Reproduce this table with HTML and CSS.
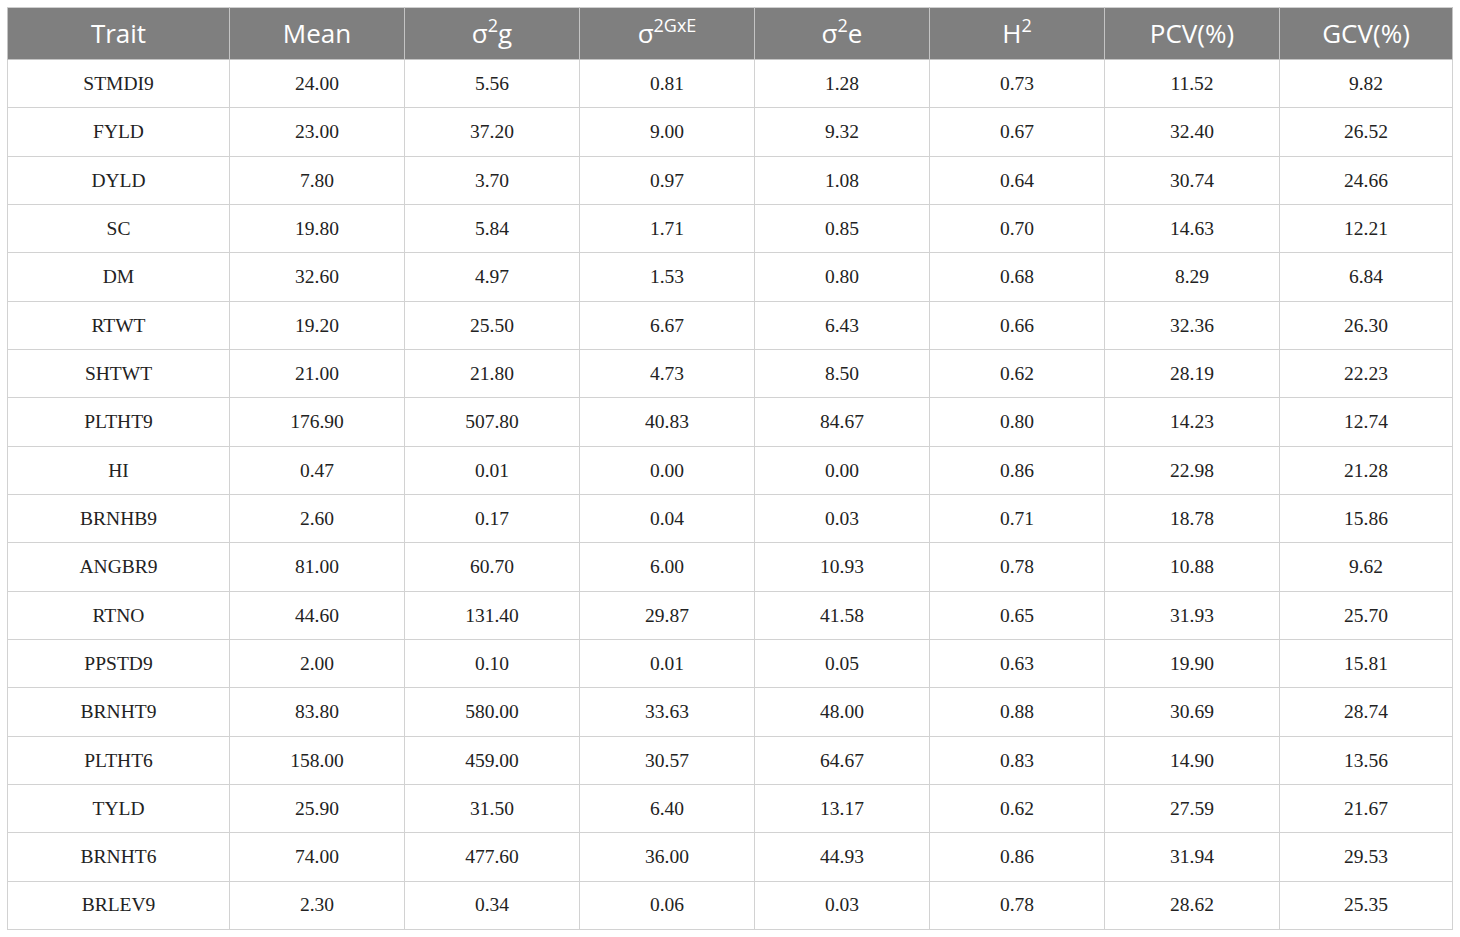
FILE: index.html
```html
<!DOCTYPE html>
<html>
<head>
<meta charset="utf-8">
<link rel="stylesheet" href="styles.css">
</head>
<body>
<table class="tbl">
<colgroup>
<col class="c1"><col class="cn"><col class="cn"><col class="cn"><col class="cn"><col class="cn"><col class="cn"><col class="cl">
</colgroup>
<thead>
<tr><th>Trait</th><th>Mean</th><th>σ<sup>2</sup>g</th><th>σ<sup>2GxE</sup></th><th>σ<sup>2</sup>e</th><th>H<sup>2</sup></th><th>PCV(%)</th><th>GCV(%)</th></tr>
</thead>
<tbody>
<tr><td>STMDI9</td><td>24.00</td><td>5.56</td><td>0.81</td><td>1.28</td><td>0.73</td><td>11.52</td><td>9.82</td></tr>
<tr><td>FYLD</td><td>23.00</td><td>37.20</td><td>9.00</td><td>9.32</td><td>0.67</td><td>32.40</td><td>26.52</td></tr>
<tr><td>DYLD</td><td>7.80</td><td>3.70</td><td>0.97</td><td>1.08</td><td>0.64</td><td>30.74</td><td>24.66</td></tr>
<tr><td>SC</td><td>19.80</td><td>5.84</td><td>1.71</td><td>0.85</td><td>0.70</td><td>14.63</td><td>12.21</td></tr>
<tr><td>DM</td><td>32.60</td><td>4.97</td><td>1.53</td><td>0.80</td><td>0.68</td><td>8.29</td><td>6.84</td></tr>
<tr><td>RTWT</td><td>19.20</td><td>25.50</td><td>6.67</td><td>6.43</td><td>0.66</td><td>32.36</td><td>26.30</td></tr>
<tr><td>SHTWT</td><td>21.00</td><td>21.80</td><td>4.73</td><td>8.50</td><td>0.62</td><td>28.19</td><td>22.23</td></tr>
<tr><td>PLTHT9</td><td>176.90</td><td>507.80</td><td>40.83</td><td>84.67</td><td>0.80</td><td>14.23</td><td>12.74</td></tr>
<tr><td>HI</td><td>0.47</td><td>0.01</td><td>0.00</td><td>0.00</td><td>0.86</td><td>22.98</td><td>21.28</td></tr>
<tr><td>BRNHB9</td><td>2.60</td><td>0.17</td><td>0.04</td><td>0.03</td><td>0.71</td><td>18.78</td><td>15.86</td></tr>
<tr><td>ANGBR9</td><td>81.00</td><td>60.70</td><td>6.00</td><td>10.93</td><td>0.78</td><td>10.88</td><td>9.62</td></tr>
<tr><td>RTNO</td><td>44.60</td><td>131.40</td><td>29.87</td><td>41.58</td><td>0.65</td><td>31.93</td><td>25.70</td></tr>
<tr><td>PPSTD9</td><td>2.00</td><td>0.10</td><td>0.01</td><td>0.05</td><td>0.63</td><td>19.90</td><td>15.81</td></tr>
<tr><td>BRNHT9</td><td>83.80</td><td>580.00</td><td>33.63</td><td>48.00</td><td>0.88</td><td>30.69</td><td>28.74</td></tr>
<tr><td>PLTHT6</td><td>158.00</td><td>459.00</td><td>30.57</td><td>64.67</td><td>0.83</td><td>14.90</td><td>13.56</td></tr>
<tr><td>TYLD</td><td>25.90</td><td>31.50</td><td>6.40</td><td>13.17</td><td>0.62</td><td>27.59</td><td>21.67</td></tr>
<tr><td>BRNHT6</td><td>74.00</td><td>477.60</td><td>36.00</td><td>44.93</td><td>0.86</td><td>31.94</td><td>29.53</td></tr>
<tr><td>BRLEV9</td><td>2.30</td><td>0.34</td><td>0.06</td><td>0.03</td><td>0.78</td><td>28.62</td><td>25.35</td></tr>
</tbody>
</table>
</body>
</html>
```
FILE: styles.css
```css
html, body {
  margin: 0;
  padding: 0;
  background: #ffffff;
}
body {
  padding: 7px 0 0 7px;
}
.tbl {
  border-collapse: collapse;
  table-layout: fixed;
  width: 1446px;
}
.c1 { width: 222px; }
.cn { width: 175px; }
.cl { width: 173px; }
.tbl th {
  background: #7f7f7f;
  color: #ffffff;
  font-family: "Open Sans", "Liberation Sans", sans-serif;
  font-weight: 400;
  font-size: 26px;
  height: 49px;
  padding: 0 0 2px 0;
  text-align: center;
  vertical-align: middle;
  border: 1px solid #c4c4c4;
  border-top-color: #cfcfcf;
  line-height: 1;
}
.tbl th sup {
  font-size: 18px;
  vertical-align: 11px;
  line-height: 0;
}
.tbl td {
  font-family: "Liberation Serif", "Times New Roman", serif;
  font-size: 19.5px;
  color: #222222;
  text-align: center;
  vertical-align: middle;
  height: 47.33px;
  padding: 0;
  border: 1px solid #d2d2d2;
  line-height: 1;
}
```
